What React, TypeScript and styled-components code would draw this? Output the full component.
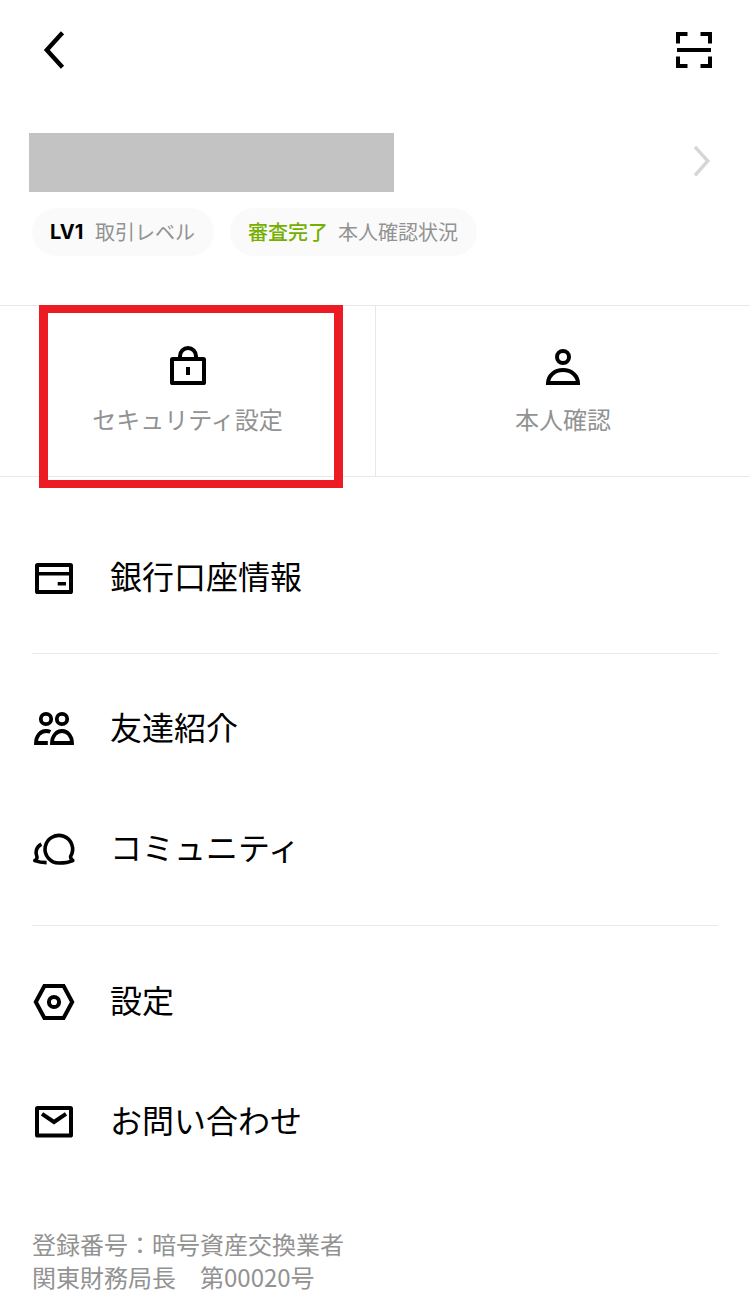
import React from "react";
import styled, { createGlobalStyle } from "styled-components";

const GlobalStyle = createGlobalStyle`
  * { box-sizing: border-box; }
  body {
    margin: 0;
    background: #fff;
    color: #000;
    font-family: "Noto Sans CJK JP", sans-serif;
  }
`;

const Page = styled.main`
  width: 750px;
  height: 1300px;
  overflow: hidden;
  background: #fff;
`;

const Icon = styled.svg`
  display: block;
  flex: none;
  fill: none;
  stroke: currentColor;
  stroke-width: 4;
`;

const TopBar = styled.header`
  display: flex;
  justify-content: space-between;
  height: 100px;
  padding: 28px 34px 28px 32px;
`;

const Profile = styled.section`
  display: flex;
  align-items: center;
  justify-content: space-between;
  height: 59px;
  margin-top: 33px;
  padding: 0 34px 0 29px;
`;

const NameMask = styled.div`
  width: 365px;
  height: 59px;
  background: #c3c3c3;
`;

const Badges = styled.div`
  display: flex;
  gap: 16px;
  margin-top: 16px;
  padding-left: 32px;
`;

const Badge = styled.div<{ $width: number }>`
  display: flex;
  align-items: center;
  gap: 10px;
  width: ${(p) => p.$width}px;
  height: 48px;
  padding: 0 0 1px 18px;
  border-radius: 24px;
  background: #fafafa;
  color: #929292;
  font-size: 20px;
  line-height: 30px;
  white-space: nowrap;
`;

const Level = styled.strong`
  width: 35px;
  padding-top: 1px;
  font-family: Inter, sans-serif;
  font-size: 20px;
  font-weight: 700;
  color: #000;
`;

const Status = styled.span`
  color: #75b000;
  font-weight: 500;
`;

const Shortcuts = styled.section`
  position: relative;
  display: grid;
  grid-template-columns: 376px 1fr;
  height: 172px;
  margin-top: 49px;
  border-top: 1px solid #e8e8e8;
  border-bottom: 1px solid #e8e8e8;
`;

const Shortcut = styled.div`
  display: flex;
  flex-direction: column;
  align-items: center;
  padding-top: 38px;
  color: #929292;
  font-size: 24px;
  line-height: 36px;

  &:first-child {
    border-right: 1px solid #e8e8e8;
  }

  svg {
    color: #000;
    margin-bottom: 13px;
  }
`;

const Highlight = styled.div`
  position: absolute;
  left: 39px;
  top: -1px;
  width: 304px;
  height: 183px;
  border: solid #ed1c24;
  border-width: 8px 9px;
`;

const Menu = styled.nav`
  padding: 41px 32px 0;
`;

const Group = styled.div`
  & + & {
    margin-top: 15px;
    padding-top: 15px;
    border-top: 1px solid #e8e8e8;
  }
  & + & + & {
    margin-top: 16px;
    padding-top: 16px;
  }
`;

const Row = styled.div`
  display: flex;
  align-items: center;
  gap: 34px;
  height: 120px;
  font-size: 32px;
  line-height: 48px;

  span {
    padding-bottom: 6px;
  }
`;

const Footer = styled.footer`
  padding: 45px 32px 0;
  color: #929292;
  font-size: 24px;
  line-height: 33px;
  white-space: pre;
`;

const icons = {
  card: (
    <>
      <rect x="5" y="9" width="34" height="27" rx="0.6" />
      <path d="M4 17.7H40M25.7 27.7H34" strokeWidth="3.6" />
    </>
  ),
  friends: (
    <>
      <circle cx="14" cy="12" r="5.2" strokeWidth="3.8" />
      <circle cx="30" cy="12" r="5.2" strokeWidth="3.8" />
      <path d="M15.8 36H4C4 29 8.4 24 14 24c1.8 0 3.2.3 4.4.9" strokeWidth="3.8" />
      <path d="M20 36C20 29 24.5 24 30 24s10 5 10 12z" strokeWidth="3.8" />
    </>
  ),
  chat: (
    <g strokeWidth="3.6" strokeLinejoin="round">
      <path d="M38.6 29.4A13.8 13.8 0 1 0 27 36C31.8 36 36.6 35.5 40.8 33.6 39.5 32.7 38.6 31.4 38.6 29.4Z" />
      <path d="M9.4 17.2C4.6 19.7 2.6 25 5 30 5.2 31.6 4.4 32.7 2.8 33.6 6.4 35 10.4 35.6 14.6 35.6" />
    </g>
  ),
  settings: (
    <>
      <path d="M3.8 22 12.4 6H31.6L40.2 22 31.6 38H12.4z" />
      <circle cx="22" cy="22" r="5.1" />
    </>
  ),
  mail: (
    <>
      <rect x="5" y="8" width="34" height="27.5" rx="0.6" />
      <path d="M10 13.8 22 22 34 13.8" />
    </>
  ),
};

const groups: { icon: keyof typeof icons; label: string }[][] = [
  [{ icon: "card", label: "銀行口座情報" }],
  [
    { icon: "friends", label: "友達紹介" },
    { icon: "chat", label: "コミュニティ" },
  ],
  [
    { icon: "settings", label: "設定" },
    { icon: "mail", label: "お問い合わせ" },
  ],
];

export default function App() {
  return (
    <Page>
      <GlobalStyle />
      <TopBar>
        <Icon width="44" height="44" viewBox="0 0 44 44">
          <path d="M30.5 4.8 14.8 22 30.5 39.2" strokeWidth="4.4" />
        </Icon>
        <Icon width="44" height="44" viewBox="0 0 44 44">
          <path d="M6 15.5V6H15.5M28.5 6H38V15.5M38 28.5V38H28.5M15.5 38H6V28.5M5 22H39" />
        </Icon>
      </TopBar>
      <Profile>
        <NameMask />
        <Icon width="24" height="40" viewBox="0 0 24 40" color="#d6d6d6">
          <path d="M3 3.8 15.8 18 3 32.4" strokeWidth="3.4" />
        </Icon>
      </Profile>
      <Badges>
        <Badge $width={182}>
          <Level>LV1</Level>取引レベル
        </Badge>
        <Badge $width={247}>
          <Status>審査完了</Status>本人確認状況
        </Badge>
      </Badges>
      <Shortcuts>
        <Shortcut>
          <Icon width="44" height="44" viewBox="0 0 44 44">
            <rect x="6" y="15" width="32" height="24" rx="0.6" />
            <path d="M14 14V12a8 8 0 0 1 16 0v2M22 23V31" />
          </Icon>
          セキュリティ設定
        </Shortcut>
        <Shortcut>
          <Icon width="44" height="44" viewBox="0 0 44 44">
            <circle cx="22" cy="13" r="6" />
            <path d="M7 39C7.3 31.4 13.7 26 22 26s14.7 5.4 15 13z" />
          </Icon>
          本人確認
        </Shortcut>
        <Highlight />
      </Shortcuts>
      <Menu>
        {groups.map((rows, i) => (
          <Group key={i}>
            {rows.map((row) => (
              <Row key={row.label}>
                <Icon width="44" height="44" viewBox="0 0 44 44">
                  {icons[row.icon]}
                </Icon>
                <span>{row.label}</span>
              </Row>
            ))}
          </Group>
        ))}
      </Menu>
      <Footer>{"登録番号：暗号資産交換業者\n関東財務局長　第00020号"}</Footer>
    </Page>
  );
}
